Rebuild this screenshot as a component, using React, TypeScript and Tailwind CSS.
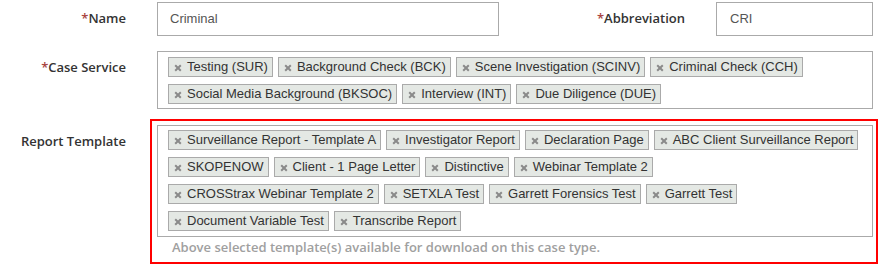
import React from "react";

const caseServices = [
  "Testing (SUR)",
  "Background Check (BCK)",
  "Scene Investigation (SCINV)",
  "Criminal Check (CCH)",
  "Social Media Background (BKSOC)",
  "Interview (INT)",
  "Due Diligence (DUE)",
];

const templates = [
  "Surveillance Report - Template A",
  "Investigator Report",
  "Declaration Page",
  "ABC Client Surveillance Report",
  "SKOPENOW",
  "Client - 1 Page Letter",
  "Distinctive",
  "Webinar Template 2",
  "CROSStrax Webinar Template 2",
  "SETXLA Test",
  "Garrett Forensics Test",
  "Garrett Test",
  "Document Variable Test",
  "Transcribe Report",
];

function XIcon() {
  return (
    <svg width="8" height="8" viewBox="0 0 8 8" className="absolute left-[5px] top-[6px]">
      <path d="M1.2 1.2 L6.8 6.8 M6.8 1.2 L1.2 6.8" stroke="#8a8a8a" strokeWidth="2" strokeLinecap="butt" />
    </svg>
  );
}

function Tag({ label }: { label: string }) {
  return (
    <div className="relative h-[20px] border border-[#aaaaaa] bg-[#e4e8e4] pl-[18px] pr-[4px] text-[13px] leading-[18px] text-[#333333] font-['Liberation_Sans',Arial,sans-serif] whitespace-nowrap">
      <XIcon />
      {label}
    </div>
  );
}

function TagBox({ items, pt, pb }: { items: string[]; pt: string; pb: string }) {
  return (
    <div className={`w-[716px] border border-[#aaaaaa] bg-white pl-[10px] pr-[10px] ${pt} ${pb}`}>
      <div className="flex flex-wrap gap-x-[5px] gap-y-[7px]">
        {items.map((t) => (
          <Tag key={t} label={t} />
        ))}
      </div>
    </div>
  );
}

function Label({ text, required, w, cls = "" }: { text: string; required?: boolean; w: string; cls?: string }) {
  return (
    <div
      className={`${w} ${cls} shrink-0 text-right text-[13px] leading-[20px] font-semibold text-[#333333] font-['Open_Sans',sans-serif]`}
    >
      {required && <span className="text-[#a94442]">*</span>}
      {text}
    </div>
  );
}

export default function App() {
  return (
    <div className="w-[888px] h-[270px] bg-white pt-[2px] relative overflow-hidden">
      {/* Row 1 */}
      <div className="flex items-start">
        <Label text="Name" required w="w-[126px]" cls="pt-[6px]" />
        <div className="ml-[31px] w-[342px] h-[34px] border border-[#aaaaaa] pl-[12px] flex items-center text-[13px] text-[#555555] font-['Liberation_Sans',Arial,sans-serif]">
          Criminal
        </div>
        <Label text="Abbreviation" required w="w-[186px]" cls="pt-[6px]" />
        <div className="ml-[31px] w-[157px] h-[34px] border border-[#aaaaaa] pl-[13px] flex items-center text-[13px] text-[#555555] font-['Liberation_Sans',Arial,sans-serif]">
          CRI
        </div>
      </div>

      {/* Row 2 */}
      <div className="flex items-start mt-[15px]">
        <Label text="Case Service" required w="w-[126px]" cls="pt-[6px]" />
        <div className="ml-[31px]">
          <TagBox items={caseServices} pt="pt-[5px]" pb="pb-[4px]" />
        </div>
      </div>

      {/* Row 3 */}
      <div className="flex items-start mt-[10px]">
        <Label text="Report Template" w="w-[126px]" cls="pt-[12px]" />
        <div className="ml-[24px] w-[728px] h-[145px] border-2 border-[#ff0000] pl-[5px] pt-[4px]">
          <TagBox items={templates} pt="pt-[4px]" pb="pb-[5px]" />
          <div className="pl-[15px] mt-[1px] text-[13px] leading-[18px] font-semibold text-[#a0a0a0] font-['Open_Sans',sans-serif]">
            Above selected template(s) available for download on this case type.
          </div>
        </div>
      </div>
    </div>
  );
}
